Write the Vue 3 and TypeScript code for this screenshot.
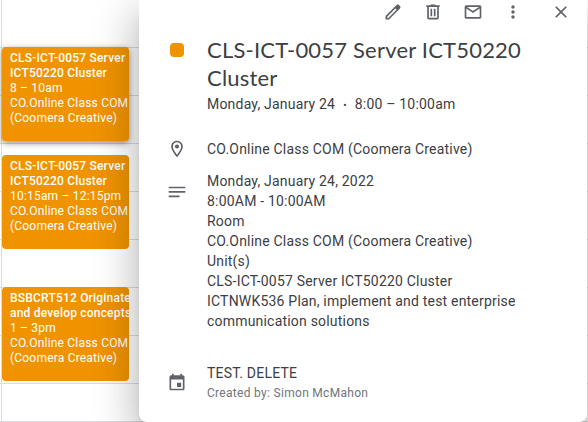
<script setup lang="ts">
interface CalendarEvent {
  title: string[]
  time: string
  place: string[]
  raised: boolean
}

const place = ['CO.Online Class COM', '(Coomera Creative)']
const events: CalendarEvent[] = [
  { title: ['CLS-ICT-0057 Server', 'ICT50220 Cluster'], time: '8 – 10am', place, raised: true },
  { title: ['CLS-ICT-0057 Server', 'ICT50220 Cluster'], time: '10:15am – 12:15pm', place, raised: false },
  { title: ['BSBCRT512 Originate', 'and develop concepts'], time: '1 – 3pm', place, raised: false },
]

const description: string[] = [
  'Monday, January 24, 2022',
  '8:00AM - 10:00AM',
  'Room',
  'CO.Online Class COM (Coomera Creative)',
  'Unit(s)',
  'CLS-ICT-0057 Server ICT50220 Cluster',
  'ICTNWK536 Plan, implement and test enterprise',
  'communication solutions',
]
</script>

<template>
  <div class="calendar">
    <div class="day">
      <article v-for="(event, i) in events" :key="i" class="event" :class="{ raised: event.raised }">
        <strong v-for="line in event.title" :key="line">{{ line }}</strong>
        <span>{{ event.time }}</span>
        <span v-for="line in event.place" :key="line">{{ line }}</span>
      </article>
    </div>

    <section class="dialog">
      <header class="toolbar">
        <button aria-label="Edit event">
          <svg viewBox="0 0 24 24"><path d="M20.41 4.94l-1.35-1.35c-.78-.78-2.05-.78-2.83 0L3 16.82V21h4.18L20.41 7.77c.79-.78.79-2.05 0-2.83zM6.41 19.06L5 19v-1.36l9.82-9.82 1.41 1.41-9.82 9.83z" /></svg>
        </button>
        <button aria-label="Delete event">
          <svg viewBox="0 0 24 24"><path d="M15 4V3H9v1H4v2h1v13c0 1.1.9 2 2 2h10c1.1 0 2-.9 2-2V6h1V4h-5zm2 15H7V6h10v13zM9 8h2v9H9zm4 0h2v9h-2z" /></svg>
        </button>
        <button aria-label="Email guests">
          <svg viewBox="0 0 24 24"><path d="M20 4H4c-1.1 0-2 .9-2 2v12c0 1.1.9 2 2 2h16c1.1 0 2-.9 2-2V6c0-1.1-.9-2-2-2zm-.8 2L12 10.8 4.8 6h14.4zM4 18V7.87l8 5.33 8-5.33V18H4z" /></svg>
        </button>
        <button aria-label="Options">
          <svg viewBox="0 0 24 24"><path d="M12 8c1.1 0 2-.9 2-2s-.9-2-2-2-2 .9-2 2 .9 2 2 2zm0 2c-1.1 0-2 .9-2 2s.9 2 2 2 2-.9 2-2-.9-2-2-2zm0 6c-1.1 0-2 .9-2 2s.9 2 2 2 2-.9 2-2-.9-2-2-2z" /></svg>
        </button>
        <button class="close" aria-label="Close">
          <svg viewBox="0 0 24 24"><path d="M19 6.41L17.59 5 12 10.59 6.41 5 5 6.41 10.59 12 5 17.59 6.41 19 12 13.41 17.59 19 19 17.59 13.41 12z" /></svg>
        </button>
      </header>

      <div class="row summary">
        <i class="swatch"></i>
        <div>
          <h1>CLS-ICT-0057 Server ICT50220<br />Cluster</h1>
          <p class="when">Monday, January 24<span class="dot">•</span>8:00 – 10:00am</p>
        </div>
      </div>

      <div class="row location">
        <svg viewBox="0 0 24 24"><path d="M12 2C8.13 2 5 5.13 5 9c0 5.25 7 13 7 13s7-7.75 7-13c0-3.87-3.13-7-7-7zM7 9c0-2.76 2.24-5 5-5s5 2.24 5 5c0 2.88-2.88 7.19-5 9.88C9.92 16.21 7 11.85 7 9z" /><circle cx="12" cy="9" r="2.5" /></svg>
        <p>CO.Online Class COM (Coomera Creative)</p>
      </div>

      <div class="row details">
        <svg viewBox="0 0 24 24"><path d="M14 17H4v2h10v-2zm6-8H4v2h16V9zM4 15h16v-2H4v2zM4 5v2h16V5H4z" class="hidden-lines" /><path d="M2 5.6h20v2H2zM2 10.9h20v2H2zM2 16.2h13v2H2z" /></svg>
        <div>
          <p v-for="line in description" :key="line">{{ line }}</p>
        </div>
      </div>

      <div class="row owner">
        <svg viewBox="0 0 24 24"><path d="M19 4h-1V2h-2v2H8V2H6v2H5c-1.11 0-1.99.9-1.99 2L3 20c0 1.1.89 2 2 2h14c1.1 0 2-.9 2-2V6c0-1.1-.9-2-2-2zm0 16H5V9h14v11zm-2-7h-5v5h5v-5z" /></svg>
        <div>
          <p>TEST. DELETE</p>
          <p class="creator">Created by: Simon McMahon</p>
        </div>
      </div>
    </section>
  </div>
</template>

<style>
body {
  margin: 0;
  overflow: hidden;
}
</style>

<style scoped>
.calendar {
  display: grid;
  grid-template-columns: 139px 448px 1px;
  height: 422px;
  overflow: hidden;
  background: #fff repeating-linear-gradient(to bottom, transparent 0 47px, #dadce0 47px 48px);
  background: repeating-linear-gradient(to bottom, #dadce0 0 1px, #fff 1px 48px) 0 -1px;
  font-family: Roboto, sans-serif;
}

.day {
  display: flex;
  flex-direction: column;
  box-sizing: border-box;
  width: 137px;
  margin-left: 2px;
  padding-top: 47px;
  box-shadow: -1px 0 #dadce0;
}

.event {
  display: flex;
  flex-direction: column;
  box-sizing: border-box;
  width: 127px;
  height: 94px;
  margin-bottom: 38px;
  padding: 4px 0 0 8px;
  overflow: hidden;
  border-radius: 4px;
  background: #f09300;
  color: #fff;
  font-size: 12px;
  line-height: 15px;
  letter-spacing: 0.2px;
  white-space: nowrap;
}

.event.raised {
  margin-bottom: 14px;
  box-shadow: 0 2px 6px rgba(0, 0, 0, 0.45);
}

.event strong {
  font-weight: 500;
}

.dialog {
  position: relative;
  box-sizing: border-box;
  height: 422px;
  border-radius: 0 0 8px 8px;
  background: #fff;
  box-shadow: 0 24px 38px 3px rgba(0, 0, 0, 0.14), 0 9px 46px 8px rgba(0, 0, 0, 0.12), 0 11px 15px -7px rgba(0, 0, 0, 0.2);
  color: #3c4043;
  font-size: 14px;
  line-height: 20px;
  letter-spacing: 0.2px;
}

p,
h1 {
  margin: 0;
}

svg {
  display: block;
  width: 20px;
  height: 20px;
  fill: #5f6368;
}

.toolbar {
  display: flex;
  justify-content: flex-end;
  box-sizing: border-box;
  height: 36px;
  padding: 2px 16px 0 0;
}

.toolbar button {
  width: 20px;
  height: 20px;
  margin-right: 20px;
  padding: 0;
  border: 0;
  background: none;
}

.toolbar .close {
  margin: 0 0 0 8px;
}

.row {
  display: grid;
  grid-template-columns: 20px 1fr;
  column-gap: 20px;
  padding-left: 28px;
  white-space: nowrap;
}

.swatch {
  width: 14px;
  height: 14px;
  margin: 7px 0 0 3px;
  border-radius: 4px;
  background: #f09300;
}

h1 {
  font: 400 22px/28px Lato, sans-serif;
  letter-spacing: 0.2px;
}

.when {
  margin-top: 2px;
}

.dot {
  margin: 0 8px;
  font-size: 10px;
}

.location {
  margin-top: 23px;
}

.details {
  margin-top: 12px;
}

.details svg {
  margin-top: 11px;
}

.hidden-lines {
  display: none;
}

.owner {
  margin-top: 32px;
}

.owner svg {
  margin-top: 9px;
}

.creator {
  color: #70757a;
  font-size: 12px;
  letter-spacing: 0.3px;
}
</style>
